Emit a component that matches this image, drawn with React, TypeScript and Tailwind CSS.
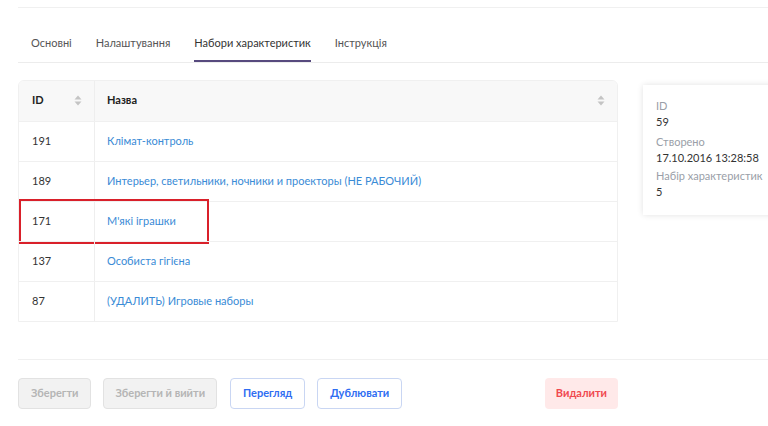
import React from "react";

const tabs = ["Основні", "Налаштування", "Набори характеристик", "Інструкція"];

const rows = [
  { id: 191, name: "Клімат-контроль" },
  { id: 189, name: "Интерьер, светильники, ночники и проекторы (НЕ РАБОЧИЙ)" },
  { id: 171, name: "М'які іграшки", marked: true },
  { id: 137, name: "Особиста гігієна" },
  { id: 87, name: "(УДАЛИТЬ) Игровые наборы" },
];

const SortIcon = () => (
  <svg width="8" height="11" viewBox="0 0 8 11" className="text-[#c4c4c4]">
    <path d="M4 0.5 L7.5 4.5 H0.5 Z" fill="currentColor" />
    <path d="M4 10.5 L7.5 6.5 H0.5 Z" fill="currentColor" />
  </svg>
);

export default function App() {
  return (
    <div className="w-[768px] h-[426px] overflow-hidden bg-white font-['Lato','Noto_Sans',sans-serif] text-[11px]">
      <div className="w-[900px] pl-[18px] pt-[7px]">
        <div className="border-t border-[#f0f0f0]" />

        {/* tabs */}
        <div className="mt-[27px] flex border-b border-[#ececec] pl-[13px] text-[#555]">
          {tabs.map((t, i) => (
            <div
              key={t}
              className={
                i === 2
                  ? "mr-[24px] border-b-2 border-[#574a7e] pb-[8px] text-[#333]"
                  : "mr-[24px] pb-[8px] border-b-2 border-transparent"
              }
            >
              {t}
            </div>
          ))}
        </div>

        <div className="mt-[17px] flex items-start">
          {/* table */}
          <div className="w-[600px] rounded-t-[6px] border border-[#f0f0f0] overflow-hidden">
            <div className="flex h-[40px] items-center bg-[#f8f8f8] font-bold text-[#222]">
              <div className="flex h-full w-[76px] items-center justify-between border-r border-[#eeeeee] pl-[13px] pr-[12px]">
                <span>ID</span>
                <SortIcon />
              </div>
              <div className="flex flex-1 items-center justify-between pl-[12px] pr-[12px]">
                <span>Назва</span>
                <SortIcon />
              </div>
            </div>
            {rows.map((r) => (
              <div key={r.id} className="relative flex h-[40px] items-center border-t border-[#f0f0f0]">
                <div className="flex h-full w-[76px] items-center border-r border-[#eeeeee] pl-[13px] text-[#333]">
                  {r.id}
                </div>
                <div className="pl-[12px] text-[#3a8bd6]">{r.name}</div>
                {r.marked && (
                  <div className="absolute left-0 top-[-3px] h-[45px] w-[190px] border-2 border-[#d9202a]" />
                )}
              </div>
            ))}
          </div>

          {/* info card */}
          <div className="ml-[25px] mt-[5px] w-[160px] bg-white pb-[15px] pl-[13px] pt-[13px] shadow-[0_0_6px_rgba(0,0,0,0.12)] leading-[16px]">
            <div className="text-[#9aa0a8]">ID</div>
            <div className="text-[#333]">59</div>
            <div className="mt-[4px] text-[#9aa0a8]">Створено</div>
            <div className="text-[#333]">17.10.2016 13:28:58</div>
            <div className="mt-[2px] text-[#9aa0a8]">Набір характеристик</div>
            <div className="text-[#333]">5</div>
          </div>
        </div>

        <div className="mt-[37px] border-t border-[#f0f0f0]" />

        {/* actions */}
        <div className="mt-[18px] flex w-[600px] items-center font-bold">
          <button className="h-[31px] rounded-[4px] border border-[#e2e2e2] bg-[#f2f2f2] px-[12px] text-[#b5b5b5]">
            Зберегти
          </button>
          <button className="ml-[12px] h-[31px] rounded-[4px] border border-[#e2e2e2] bg-[#f2f2f2] px-[11px] text-[#b5b5b5]">
            Зберегти й вийти
          </button>
          <button className="ml-[13px] h-[31px] rounded-[4px] border border-[#c9d6f3] bg-white px-[12px] text-[#2f6df2]">
            Перегляд
          </button>
          <button className="ml-[12px] h-[31px] rounded-[4px] border border-[#c9d6f3] bg-white px-[12px] text-[#2f6df2]">
            Дублювати
          </button>
          <button className="ml-auto h-[31px] rounded-[4px] bg-[#ffe9e9] px-[11px] text-[#f0484f]">
            Видалити
          </button>
        </div>
      </div>
    </div>
  );
}
